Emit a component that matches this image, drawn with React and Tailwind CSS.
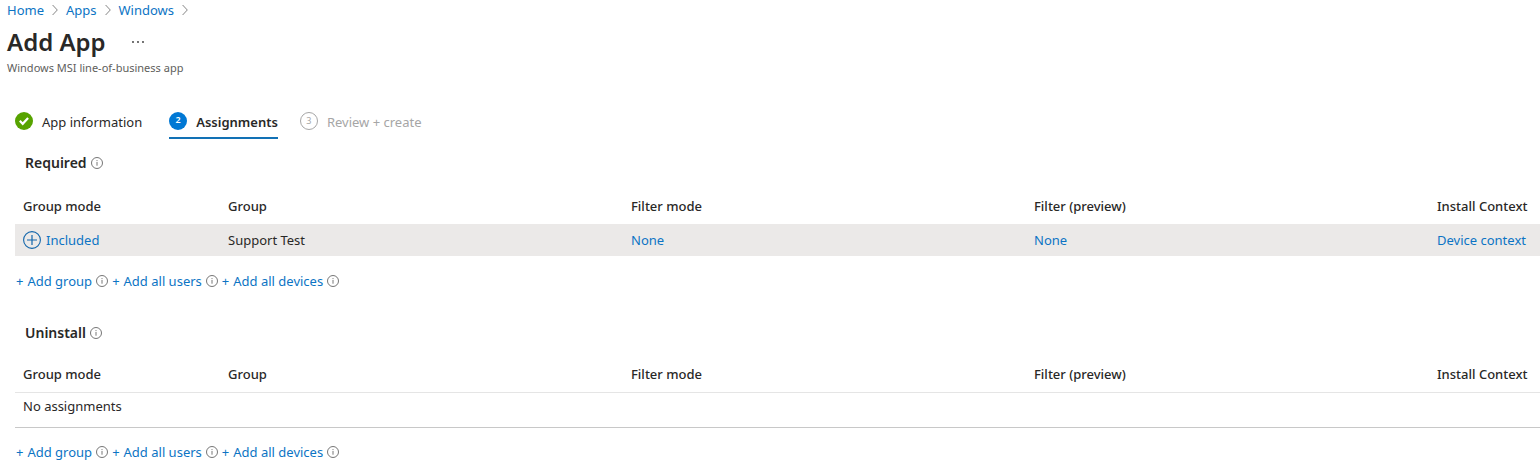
import React from "react";

const HEADINGS = ["Group mode", "Group", "Filter mode", "Filter (preview)", "Install Context"];

function InfoIcon({ label }) {
  return (
    <svg role="img" aria-label={label} viewBox="0 0 12 12" className="size-3 shrink-0 text-[#666]">
      <circle cx="6" cy="6" r="5.5" fill="none" stroke="currentColor" strokeWidth="0.9" />
      <path d="M6 5v3.7" stroke="currentColor" strokeWidth="0.9" />
      <path d="M6 3.1v1" stroke="currentColor" strokeWidth="0.9" />
    </svg>
  );
}

function Chevron() {
  return (
    <svg aria-hidden="true" viewBox="0 0 6 12" className="h-3 w-1.5 shrink-0">
      <path d="M0.6 1 5.3 6 0.6 11" fill="none" stroke="#777" strokeWidth="0.9" />
    </svg>
  );
}

function Breadcrumb() {
  return (
    <nav aria-label="Breadcrumb" className="px-[7px]">
      <ol className="flex h-5 items-center gap-2 text-[#0c74c4]">
        {["Home", "Apps", "Windows"].map((item) => (
          <li key={item} className="flex items-center gap-2">
            <a href="#">{item}</a>
            <Chevron />
          </li>
        ))}
      </ol>
    </nav>
  );
}

function Steps() {
  return (
    <nav aria-label="Steps" className="mt-8 flex h-[31px] items-stretch gap-[22px] px-[15px]">
      <button type="button" className="flex items-start gap-[9px] pr-[5px]">
        <svg aria-hidden="true" viewBox="0 0 18 18" className="mt-1 size-[18px]">
          <circle cx="9" cy="9" r="9" fill="#57a300" />
          <path d="M4.8 8.8 7.7 11.8 13.1 6" fill="none" stroke="#fff" strokeWidth="2.2" />
        </svg>
        <span className="mt-1 leading-5">App information</span>
      </button>
      <button type="button" aria-current="step" className="flex items-start gap-[9px] border-b-2 border-[#1271b5] font-semibold">
        <span className="mt-1 flex size-[18px] justify-center rounded-full bg-[#0078d4] text-[9px] leading-4 text-white">2</span>
        <span className="mt-1 leading-5">Assignments</span>
      </button>
      <button type="button" className="flex items-start gap-[9px] text-[#a6a6a6]">
        <span className="mt-1 flex size-[18px] justify-center rounded-full border border-[#a6a6a6] text-[9px] leading-4">3</span>
        <span className="mt-1 leading-5">Review + create</span>
      </button>
    </nav>
  );
}

function AssignmentTable({ label, children, bodyClass }) {
  return (
    <table aria-label={label} className="w-full table-fixed border-collapse text-left">
      <colgroup>
        <col className="w-[205px]" />
        <col />
        <col />
        <col />
        <col className="w-[111px]" />
      </colgroup>
      <thead>
        <tr className="h-9">
          {HEADINGS.map((heading) => (
            <th key={heading} scope="col" className="pl-2 font-medium whitespace-nowrap">
              {heading}
            </th>
          ))}
        </tr>
      </thead>
      <tbody className={bodyClass}>{children}</tbody>
    </table>
  );
}

function AddLinks() {
  return (
    <div className="flex h-5 items-center gap-1 pl-px text-[#0c74c4]">
      {["Add group", "Add all users", "Add all devices"].map((text) => (
        <div key={text} className="flex items-center gap-1">
          <button type="button" className="flex gap-1">
            <span>+</span>
            <span>{text}</span>
          </button>
          <InfoIcon label={`About ${text}`} />
        </div>
      ))}
    </div>
  );
}

function SectionTitle({ children }) {
  return (
    <div className="flex h-5 items-center gap-1 pl-2.5">
      <h2 className="text-sm font-semibold">{children}</h2>
      <InfoIcon label={`About ${children}`} />
    </div>
  );
}

export default function App() {
  return (
    <div className="bg-white font-['Noto_Sans',sans-serif] text-[13px] leading-5 text-[#292827]">
      <Breadcrumb />
      <header className="px-[7px] pt-1.5">
        <div className="mb-0.5 flex h-8 items-center gap-[26px]">
          <h1 className="text-2xl font-semibold">Add App</h1>
          <button type="button" aria-label="More options">
            <svg viewBox="0 0 12 2" className="h-0.5 w-3" fill="#333">
              <circle cx="1" cy="1" r="0.9" />
              <circle cx="6" cy="1" r="0.9" />
              <circle cx="11" cy="1" r="0.9" />
            </svg>
          </button>
        </div>
        <p className="text-[11px] leading-4 text-[#605e5c]">Windows MSI line-of-business app</p>
      </header>
      <Steps />
      <main className="pl-[15px]">
        <section className="pt-3.5">
          <SectionTitle>Required</SectionTitle>
          <div className="pt-[15px]">
            <AssignmentTable label="Required assignments">
              <tr className="h-8 bg-[#ebe9e8]">
                <td className="pl-2 text-[#0c74c4]">
                  <a href="#" className="flex items-center gap-[5px]">
                    <svg aria-hidden="true" viewBox="0 0 18 18" className="size-[18px]" fill="none" stroke="#1266ab">
                      <circle cx="9" cy="9" r="8.4" strokeWidth="1.1" />
                      <path d="M9 4v10M4 9h10" strokeWidth="1.2" />
                    </svg>
                    Included
                  </a>
                </td>
                <td className="pl-2">Support Test</td>
                <td className="pl-2 text-[#0c74c4]"><a href="#">None</a></td>
                <td className="pl-2 text-[#0c74c4]"><a href="#">None</a></td>
                <td className="pl-2 whitespace-nowrap text-[#0c74c4]"><a href="#">Device context</a></td>
              </tr>
            </AssignmentTable>
          </div>
          <div className="pt-[15px]"><AddLinks /></div>
        </section>
        <section className="pt-8">
          <SectionTitle>Uninstall</SectionTitle>
          <div className="pt-[13px]">
            <AssignmentTable label="Uninstall assignments" bodyClass="border-t border-b border-t-[#e5e5e5] border-b-[#c8c8c8]">
              <tr className="h-[35px]">
                <td colSpan={5} className="pt-[3px] pl-2 align-top">No assignments</td>
              </tr>
            </AssignmentTable>
          </div>
          <div className="pt-3.5"><AddLinks /></div>
        </section>
      </main>
    </div>
  );
}
